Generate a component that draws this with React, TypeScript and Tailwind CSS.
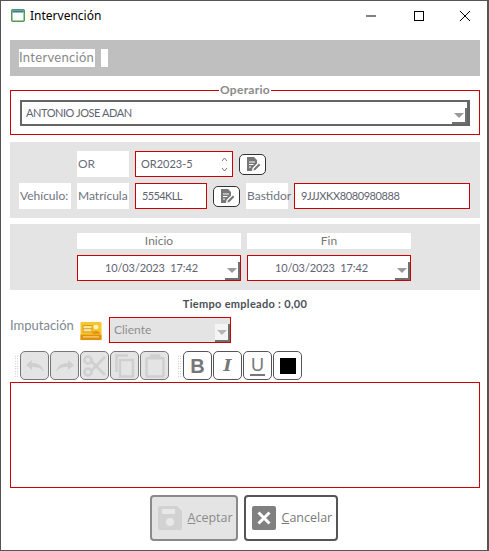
import React from "react";

const body = "font-['Lato','Liberation_Sans',sans-serif] text-[#5f6470] text-[11px]";

function Arrow({ dim }: { dim?: boolean }) {
  return (
    <div className="w-[15px] mt-[6px] flex items-center justify-center border-r-2 border-b-2 border-[#707070] bg-white/60">
      <div className={`w-0 h-0 border-l-[5px] border-r-[5px] border-t-[5px] border-l-transparent border-r-transparent ${dim ? "border-t-[#b5b5b5]" : "border-t-[#9a9a9a]"}`} />
    </div>
  );
}

function Label({ children, className = "" }: { children: React.ReactNode; className?: string }) {
  return <div className={`bg-white h-[26px] flex items-center pl-[1px] text-[12px] text-[#6d7280] ${className}`}>{children}</div>;
}

function NoteBtn({ className = "" }: { className?: string }) {
  return (
    <button className={`w-[27px] h-[21px] rounded-[5px] border border-[#333] bg-white flex items-center justify-center ${className}`}>
      <svg width="16" height="16" viewBox="0 0 16 16">
        <path d="M2 1h7l3 3v3.500L7.500 12 7 15H2z" fill="#777" />
        <path d="M4 6h6M4 8.500h4.500M4 11h2" stroke="#fff" strokeWidth="1" />
        <path d="M8.500 14.500l.4-2 5-5 1.500 1.500-5 5z" fill="#777" />
      </svg>
    </button>
  );
}

function DateField({ title }: { title: string }) {
  return (
    <div className="w-[164px] flex flex-col gap-[6px]">
      <div className="h-[16px] bg-white flex items-center justify-center text-[12px] text-[#777]">{title}</div>
      <div className="h-[26px] border border-[#cc0000] bg-white flex items-stretch">
        <div className="flex-1 flex items-center justify-center tracking-[-0.1px]">10/03/2023&nbsp; 17:42</div>
        <Arrow />
      </div>
    </div>
  );
}

function ToolBtn({ children, dim }: { children: React.ReactNode; dim?: boolean }) {
  return (
    <button className={`w-[29px] h-[29px] rounded-[5px] border flex items-center justify-center ${dim ? "border-[#777] bg-[#e4e4e4]" : "border-[#555] bg-white"}`}>
      {children}
    </button>
  );
}

function Grip() {
  return <div className="w-[5px] h-[22px] mx-[1px] bg-[radial-gradient(#aaa_0.6px,transparent_0.8px)] bg-[length:2.500px_2.500px]" />;
}

const tool = "#cfcfcf";

export default function App() {
  return (
    <div className={`w-[489px] h-[551px] bg-white border-l border-r-2 border-t border-b border-[#555] flex flex-col ${body}`}>
      {/* barra de titulo */}
      <div className="h-[29px] shrink-0 flex items-center pl-[10px] text-black">
        <svg width="14" height="13" viewBox="0 0 14 13">
          <rect x="0.750" y="0.750" width="12.500" height="11.500" rx="1" fill="#fff" stroke="#4f9a56" strokeWidth="1.500" />
          <rect x="1.500" y="1.500" width="11" height="2" fill="#2f7d9a" />
        </svg>
        <span className="ml-[5px] font-['Noto_Sans','Open_Sans',sans-serif] text-[12px]">Intervención</span>
        <div className="ml-auto flex items-center">
          <svg width="12" height="12" viewBox="0 0 12 12" className="mr-[36px]"><path d="M1 6h10" stroke="#000" /></svg>
          <svg width="12" height="12" viewBox="0 0 12 12" className="mr-[34px]"><rect x="1.500" y="1.500" width="9" height="9" fill="none" stroke="#000" /></svg>
          <svg width="12" height="12" viewBox="0 0 12 12" className="mr-[16px]"><path d="M1 1l10 10M11 1L1 11" stroke="#000" /></svg>
        </div>
      </div>

      <div className="flex-1 flex flex-col pl-[9px] pr-[7px] pt-[10px]">
        {/* cabecera */}
        <div className="h-[36px] bg-[#bfbfbf] flex items-center pl-[9px] gap-[6px]">
          <div className="h-[18px] w-[76px] bg-white flex items-center text-[13px] text-[#888] tracking-[0.3px]">Intervención</div>
          <div className="h-[18px] w-[7px] bg-white" />
        </div>

        {/* operario */}
        <fieldset className="mt-[9px] h-[50px] border border-[#cc0000] px-[9px] pb-[8px] min-w-0">
          <legend className="mx-auto px-[1px] text-[12px] font-bold text-[#8a8a8a] leading-[10px] tracking-[0.3px]">Operario</legend>
          <div className="mt-[5px] h-[26px] border-2 border-r-[3px] border-[#666] bg-white flex items-stretch">
            <div className="flex-1 flex items-center pl-[4px] pt-[1px] text-[11px] tracking-[-0.45px]">ANTONIO JOSE ADAN</div>
            <Arrow />
          </div>
        </fieldset>

        {/* vehiculo */}
        <div className="mt-[7px] h-[76px] bg-[#e4e4e4] pl-[9px] pt-[9px] flex flex-col gap-[6px]">
          <div className="flex items-center">
            <div className="w-[58px]" />
            <Label className="w-[52px]">OR</Label>
            <div className="ml-[6px] w-[98px] h-[26px] border border-[#cc0000] bg-white flex items-center pl-[5px] pr-[4px] justify-between">
              <span>OR2023-5</span>
              <span className="flex flex-col gap-[5px]">
                <svg width="7" height="5" viewBox="0 0 7 5"><path d="M1 4l2.500-3L6 4" fill="none" stroke="#777" /></svg>
                <svg width="7" height="5" viewBox="0 0 7 5"><path d="M1 1l2.500 3L6 1" fill="none" stroke="#777" /></svg>
              </span>
            </div>
            <NoteBtn className="ml-[6px]" />
          </div>
          <div className="flex items-center">
            <Label className="w-[52px]">Vehículo:</Label>
            <Label className="w-[52px] ml-[6px]">Matrícula</Label>
            <div className="ml-[6px] w-[72px] h-[26px] border border-[#cc0000] bg-white flex items-center pl-[6px] tracking-[-0.6px]">5554KLL</div>
            <NoteBtn className="ml-[6px]" />
            <Label className="w-[42px] ml-[6px]">Bastidor</Label>
            <div className="ml-[6px] w-[176px] h-[26px] border border-[#cc0000] bg-white flex items-center pl-[6px] tracking-[-0.4px]">9JJJXKX8080980888</div>
          </div>
        </div>

        {/* fechas */}
        <div className="mt-[6px] h-[66px] bg-[#e4e4e4] pl-[67px] pt-[9px] flex gap-[6px]">
          <DateField title="Inicio" />
          <DateField title="Fin" />
        </div>

        <div className="mt-[8px] h-[12px] flex items-center justify-center text-[11px] font-bold text-[#4b5058] tracking-[0.3px]">Tiempo empleado : 0,00</div>

        {/* imputacion */}
        <div className="mt-[7px] h-[26px] flex items-start">
          <span className="w-[70px] text-[13px] text-[#7d8790] leading-[16px]">Imputación</span>
          <svg width="22" height="20" viewBox="0 0 22 22" className="mt-[4px]" preserveAspectRatio="none">
            <rect x="0.500" y="1" width="21" height="20" rx="1" fill="#f8c62c" />
            <rect x="0.500" y="15" width="21" height="6" fill="#e0900f" />
            <path d="M3 5h9v7H3z" fill="#fde79a" stroke="#c98a14" strokeWidth="0.800" />
            <path d="M3 8.500h9" stroke="#c98a14" strokeWidth="0.800" />
            <circle cx="16" cy="6.500" r="2.500" fill="#fff3c4" />
            <path d="M12 14c0-4 8-4 8 0z" fill="#e0900f" />
            <path d="M3 17.500h16" stroke="#fde79a" />
          </svg>
          <div className="ml-[7px] w-[122px] h-[26px] border border-[#cc0000] bg-[#e4e4e4] flex items-stretch">
            <div className="flex-1 flex items-center pl-[4px] text-[#8f8f8f] text-[12px]">Cliente</div>
            <Arrow dim />
          </div>
        </div>

        {/* barra de formato */}
        <div className="mt-[8px] h-[29px] flex items-center pl-[3px]">
          <Grip />
          <div className="flex gap-[1px]">
            <ToolBtn dim>
              <svg width="20" height="14" viewBox="0 0 20 14"><path d="M1 6l6-5v3c6 0 10 2 12 9-3-4-6-5-12-5v3z" fill={tool} /></svg>
            </ToolBtn>
            <ToolBtn dim>
              <svg width="20" height="14" viewBox="0 0 20 14"><path d="M19 6l-6-5v3C7 4 3 6 1 13c3-4 6-5 12-5v3z" fill={tool} /></svg>
            </ToolBtn>
            <ToolBtn dim>
              <svg width="24" height="22" viewBox="0 0 24 22" fill="none" stroke={tool} strokeWidth="2.500">
                <path d="M8 6l14 14M8 16L22 2" />
                <circle cx="5" cy="5" r="3.500" />
                <circle cx="5" cy="17" r="3.500" />
              </svg>
            </ToolBtn>
            <ToolBtn dim>
              <svg width="20" height="24" viewBox="0 0 20 24" fill="none" stroke={tool} strokeWidth="2.500">
                <path d="M1.500 18V1.500H13" />
                <rect x="5" y="6" width="13" height="16.500" />
              </svg>
            </ToolBtn>
            <ToolBtn dim>
              <svg width="20" height="24" viewBox="0 0 20 24" fill="none" stroke={tool} strokeWidth="2.500">
                <rect x="1.500" y="4" width="17" height="18.500" rx="1" />
                <path d="M6 4h8V1.500H6z" fill={tool} />
              </svg>
            </ToolBtn>
          </div>
          <div className="ml-[7px]"><Grip /></div>
          <div className="flex gap-[1px]">
            <ToolBtn><span className="font-['Liberation_Sans',sans-serif] font-bold text-[20px] text-[#777]">B</span></ToolBtn>
            <ToolBtn><span className="font-['DejaVu_Serif',serif] font-bold italic text-[17px] text-[#777]">I</span></ToolBtn>
            <ToolBtn>
              <span className="font-['Liberation_Sans',sans-serif] text-[18px] leading-[18px] text-[#777] border-b-2 border-[#777] px-[1px]">U</span>
            </ToolBtn>
            <ToolBtn><div className="w-[16px] h-[16px] bg-black" /></ToolBtn>
          </div>
        </div>

        {/* texto */}
        <div className="mt-[2px] h-[106px] border border-[#cc0000] bg-white" />

        {/* botones */}
        <div className="mt-[7px] flex justify-center gap-[6px] pr-[3px] font-['Open_Sans',sans-serif] text-[12.500px]">
          <button className="w-[88px] h-[46px] rounded-[4px] border-2 border-[#8a8a8a] bg-[#e4e4e4] flex items-center pl-[6px] gap-[6px] text-[#8a8a8a]">
            <svg width="24" height="24" viewBox="0 0 24 24">
              <path d="M2 0h17l5 5v17a2 2 0 0 1-2 2H2a2 2 0 0 1-2-2V2a2 2 0 0 1 2-2z" fill="#d2d2d2" />
              <rect x="4" y="3" width="13" height="5" fill="#e8e8e8" />
              <circle cx="12" cy="16" r="4" fill="#e8e8e8" />
            </svg>
            <span><u>A</u>ceptar</span>
          </button>
          <button className="w-[94px] h-[46px] rounded-[4px] border-2 border-[#555] bg-white flex items-center pl-[6px] gap-[6px] text-[#7a7a7a]">
            <svg width="24" height="24" viewBox="0 0 24 24">
              <rect width="24" height="24" rx="2" fill="#808080" />
              <path d="M6.500 6.500l11 11M17.500 6.500l-11 11" stroke="#fff" strokeWidth="3" />
            </svg>
            <span><u>C</u>ancelar</span>
          </button>
        </div>
      </div>
    </div>
  );
}
